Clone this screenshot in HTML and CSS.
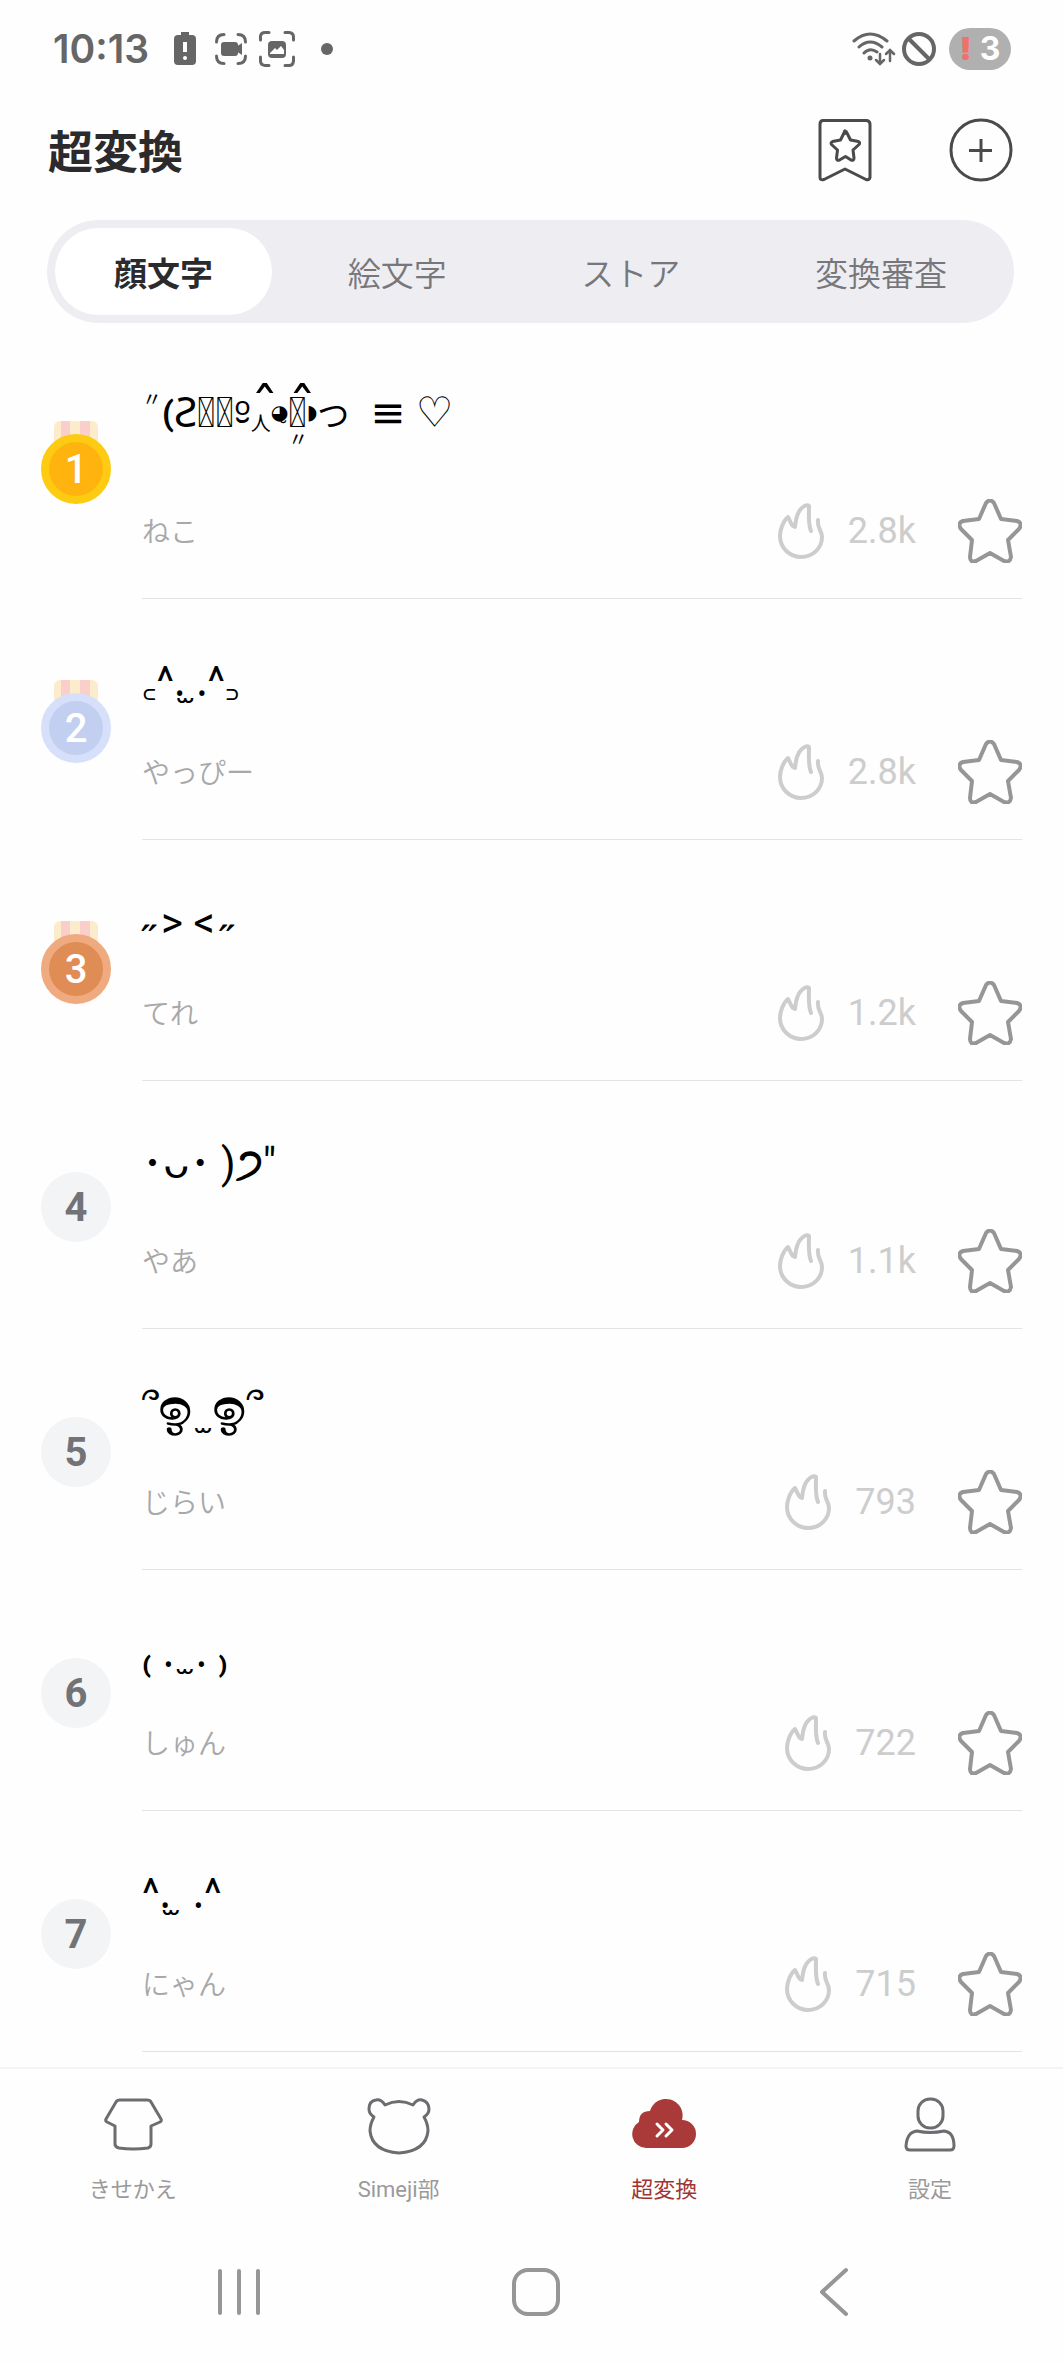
FILE: index.html
```html
<!DOCTYPE html>
<html lang="ja">
<head>
<meta charset="utf-8">
<meta name="viewport" content="width=device-width, initial-scale=1">
<title>超変換</title>
<link rel="stylesheet" href="styles.css">
</head>
<body>
<svg class="defs" width="0" height="0" aria-hidden="true">
  <symbol id="flame" viewBox="0 0 46 56">
    <path d="M33 28 C30 21 31 12 31 3 C29 1 25 3 22 7 C18 12 18 17 17 24 L15 23 C12 20 12 17 10 14 C5 18 2 27 2 33 C2 45 12 54 23 54 C35 54 44 45 44 34 C44 27 39 26 40 17" fill="none" stroke="currentColor" stroke-width="4" stroke-linecap="round" stroke-linejoin="round"/>
  </symbol>
  <symbol id="star" viewBox="0 0 64 64">
    <path d="M28 4 Q32 -1 36 4 L43 20 L59 22 Q65 24 61 30 L50 41 L53 58 Q52 64 46 62 L32 54 L18 62 Q12 64 12 58 L14 41 L3 30 Q-1 24 5 22 L21 20 Z" fill="none" stroke="currentColor" stroke-width="4" stroke-linejoin="round"/>
  </symbol>
  <symbol id="ribbon" viewBox="0 0 44 30">
    <rect width="44" height="30" rx="6" fill="#fdeccb"/>
    <path d="M7 0h9v30h-9zM26 0h10v30h-10z" fill="#fbcfc9"/>
  </symbol>
</svg>
<div class="app">
  <div class="status">
    <div class="status-group">
      <span class="clock">10:13</span>
      <svg class="s-batt" width="24" height="34" viewBox="0 0 24 34"><path d="M8 0h8v3h3q4 0 4 4v22q0 4-4 4H5q-4 0-4-4V7q0-4 4-4h3z" fill="#666"/><path d="M12 10v10" stroke="#fff" stroke-width="4"/><circle cx="12" cy="26" r="2" fill="#fff"/></svg>
      <svg class="s-cam" width="32" height="32" viewBox="0 0 32 32"><path d="M1.500 9Q1.500 1.500 9 1.500M23 1.500Q30.500 1.500 30.500 9M30.500 23Q30.500 30.500 23 30.500M9 30.500Q1.500 30.500 1.500 23" fill="none" stroke="#666" stroke-width="3" stroke-linecap="round"/><rect x="6" y="9" width="17" height="14" rx="3" fill="#666"/><path d="M21 14l6-4v12l-6-4z" fill="#666"/></svg>
      <svg class="s-img" width="36" height="36" viewBox="0 0 36 36"><path d="M1.500 9V5Q2 1.500 6 1.500H10M26 1.500H30Q34.500 2 34.500 6V9M34.500 26V30Q34 34.500 30 34.500H26M10 34.500H6Q1.500 34 1.500 30V26" fill="none" stroke="#666" stroke-width="3" stroke-linecap="round"/><rect x="9" y="10" width="18" height="17" rx="4" fill="#666"/><path d="M11 22l5-5 2 2 4-4 3 4v4H11z" fill="#fff"/></svg>
      <span class="dot"></span>
    </div>
    <div class="status-group right">
      <svg width="44" height="34" viewBox="0 0 44 34"><g fill="none" stroke="#666" stroke-width="3" stroke-linecap="round"><path d="M2 9Q18-5 35 9M7 15Q18 5 30 15M12 21Q18 15 25 20"/><path d="M28 22v9M24 28l4 4 4-4M38 29v-10M34 22l4-4 4 4" stroke-width="2.500"/></g><circle cx="18" cy="26" r="2.500" fill="#666"/></svg>
      <svg width="34" height="34" viewBox="0 0 34 34"><circle cx="17" cy="17" r="15" fill="none" stroke="#666" stroke-width="4"/><path d="M7 7l20 20" stroke="#666" stroke-width="4"/></svg>
      <span class="level"><b>!</b>3</span>
    </div>
  </div>

  <header class="header">
    <h1>超変換</h1>
    <div class="actions">
      <button aria-label="お気に入り"><svg width="64" height="64" viewBox="0 0 64 64"><g fill="none" stroke="#4a4a4a" stroke-width="3" stroke-linejoin="round"><path d="M10 2.500h43q4 0 4 4v53q-1 3-4 2L32 51 11 61.500q-4 1-4-2V6.500q0-4 3-4z"/><path d="M32 15.500Q32.800 12 34 15l3.500 7 8 1.500q2 1 .500 3L40 32l1 8q0 3-3 2l-5.500-3.500L26.500 42q-3 1-3-2l1-8-6-5.500q-1-2 1-3l8-1.500 3.500-7Q32 12 32 13z"/></g></svg></button>
      <button aria-label="追加"><svg width="64" height="64" viewBox="0 0 64 64"><circle cx="32" cy="32" r="30" fill="none" stroke="#4a4a4a" stroke-width="3"/><path d="M32 21v23M20 32.500h23" stroke="#4a4a4a" stroke-width="3"/></svg></button>
    </div>
  </header>

  <nav class="segments">
    <button class="segment on">顔文字</button>
    <button class="segment">絵文字</button>
    <button class="segment">ストア</button>
    <button class="segment">変換審査</button>
  </nav>

  <main>
  <ol class="list">
    <li class="row">
      <div class="medal gold"><svg class="ribbon" width="44" height="30"><use href="#ribbon"/></svg><span class="disc">1</span></div>
      <div class="body">
        <p class="kao double"><span class="up">〃</span><b class="arm">(</b>Ƨ&#xE000;&#xE000;ᵒ̮<span class="hat">ˆ</span><span class="mouth">人</span><span class="blob">◕̮</span><span class="hat">ˆ</span><span class="low">〃</span>&#xE000;<span class="blob">◗</span><span class="paw">つ</span>  ≡ ♡</p>
        <div class="foot"><span class="yomi">ねこ</span><span class="heat"><svg width="46" height="56"><use href="#flame"/></svg>2.8k</span><button class="fav" aria-label="保存"><svg width="64" height="64"><use href="#star"/></svg></button></div>
      </div>
    </li>
    <li class="row">
      <div class="medal silver"><svg class="ribbon" width="44" height="30"><use href="#ribbon"/></svg><span class="disc">2</span></div>
      <div class="body">
        <p class="kao">꜀^<span class="eye">.̫ .</span>^꜆</p>
        <div class="foot"><span class="yomi">やっぴー</span><span class="heat"><svg width="46" height="56"><use href="#flame"/></svg>2.8k</span><button class="fav" aria-label="保存"><svg width="64" height="64"><use href="#star"/></svg></button></div>
      </div>
    </li>
    <li class="row">
      <div class="medal bronze"><svg class="ribbon" width="44" height="30"><use href="#ribbon"/></svg><span class="disc">3</span></div>
      <div class="body">
        <p class="kao cheeks"><span class="blush">˶</span><span>&gt; &lt;</span><span class="blush">˶</span></p>
        <div class="foot"><span class="yomi">てれ</span><span class="heat"><svg width="46" height="56"><use href="#flame"/></svg>1.2k</span><button class="fav" aria-label="保存"><svg width="64" height="64"><use href="#star"/></svg></button></div>
      </div>
    </li>
    <li class="row">
      <span class="rank">4</span>
      <div class="body">
        <p class="kao tall">･ᴗ･ )<b>੭</b>"</p>
        <div class="foot"><span class="yomi">やあ</span><span class="heat"><svg width="46" height="56"><use href="#flame"/></svg>1.1k</span><button class="fav" aria-label="保存"><svg width="64" height="64"><use href="#star"/></svg></button></div>
      </div>
    </li>
    <li class="row">
      <span class="rank">5</span>
      <div class="body">
        <p class="kao">՞<b class="swirl">ඉ</b> ̫ <b class="swirl">ඉ</b>՞</p>
        <div class="foot"><span class="yomi">じらい</span><span class="heat"><svg width="46" height="56"><use href="#flame"/></svg>793</span><button class="fav" aria-label="保存"><svg width="64" height="64"><use href="#star"/></svg></button></div>
      </div>
    </li>
    <li class="row">
      <span class="rank">6</span>
      <div class="body">
        <p class="kao">₍ <span class="eye">. ̫ .</span> ₎</p>
        <div class="foot"><span class="yomi">しゅん</span><span class="heat"><svg width="46" height="56"><use href="#flame"/></svg>722</span><button class="fav" aria-label="保存"><svg width="64" height="64"><use href="#star"/></svg></button></div>
      </div>
    </li>
    <li class="row">
      <span class="rank">7</span>
      <div class="body">
        <p class="kao">^<span class="eye">.̫  .</span>^</p>
        <div class="foot"><span class="yomi">にゃん</span><span class="heat"><svg width="46" height="56"><use href="#flame"/></svg>715</span><button class="fav" aria-label="保存"><svg width="64" height="64"><use href="#star"/></svg></button></div>
      </div>
    </li>
  </ol>
  </main>

  <nav class="tabbar">
    <a class="tab" href="#kisekae"><svg width="64" height="64" viewBox="0 0 64 64"><path d="M19 7h27q3 0 4 2l10 17q1 2-1 3l-9 4v18q0 3-3 4-15 2-29 0-4-1-4-4V33l-8-4q-2-1-1-3L15 9q1-2 4-2z" fill="none" stroke="#6c6d70" stroke-width="3" stroke-linejoin="round"/></svg>きせかえ</a>
    <a class="tab" href="#simeji"><svg width="64" height="64" viewBox="0 0 64 64"><path d="M18 12q14-7 28 0 4-6 9-5 7 2 7 9 0 5-5 8 4 7 4 14-2 20-29 22Q5 58 3 38q0-7 4-14-5-3-5-8 0-8 7-9 5-1 9 5z" fill="none" stroke="#6c6d70" stroke-width="3" stroke-linejoin="round"/></svg>Simeji部</a>
    <a class="tab on" href="#henkan"><svg width="64" height="64" viewBox="0 0 64 64"><path d="M14 55A14 14 0 0 1 7 29Q7 18 18 18A16 16 0 0 1 50 27A14 14 0 0 1 50 55Z" fill="#aa3a3a"/><path d="M25 31l6 6-6 6M34 31l6 6-6 6" fill="none" stroke="#fff" stroke-width="3" stroke-linecap="round" stroke-linejoin="round"/></svg>超変換</a>
    <a class="tab" href="#settings"><svg width="64" height="64" viewBox="0 0 64 64"><g fill="none" stroke="#6c6d70" stroke-width="3" stroke-linejoin="round"><rect x="20" y="6" width="25" height="29" rx="12"/><path d="M19 38q13 3 27 0 10 1 10 15 0 4-4 4H12q-4 0-4-4Q9 39 19 38z"/></g></svg>設定</a>
  </nav>

  <div class="sysnav">
    <button aria-label="履歴"><svg width="48" height="50" viewBox="0 0 48 50"><path d="M5 4v42M24 4v42M43 4v42" stroke="#969696" stroke-width="4" stroke-linecap="round"/></svg></button>
    <button aria-label="ホーム"><svg width="50" height="50" viewBox="0 0 50 50"><rect x="3" y="3" width="44" height="44" rx="14" fill="none" stroke="#969696" stroke-width="4"/></svg></button>
    <button aria-label="戻る"><svg width="32" height="50" viewBox="0 0 32 50"><path d="M28 3L4 25l24 22" fill="none" stroke="#969696" stroke-width="4" stroke-linecap="round" stroke-linejoin="round"/></svg></button>
  </div>
</div>
</body>
</html>
```
FILE: styles.css
```css
* { box-sizing: border-box; }
body {
  margin: 0;
  background: #fefefe;
  color: #2b2b2e;
  font-family: Roboto, "Noto Sans CJK JP", sans-serif;
}
button {
  margin: 0;
  padding: 0;
  border: 0;
  background: none;
  color: inherit;
  font: inherit;
}
svg { display: block; flex: none; }
.defs { position: absolute; }
.app {
  display: flex;
  flex-direction: column;
  min-height: 100vh;
}
main { flex: 1; }

/* device status bar */
.status {
  display: flex;
  justify-content: space-between;
  align-items: center;
  height: 98px;
  padding: 0 52px 0 53px;
}
.status-group { display: flex; align-items: center; }
.status-group.right { gap: 6px; }
.clock {
  margin-right: 24px;
  color: #666;
  font: 600 39px/48px Inter, sans-serif;
}
.s-batt { margin-right: 18px; }
.s-cam { margin-right: 12px; }
.s-img { margin-right: 26px; }
.dot { width: 12px; height: 12px; border-radius: 50%; background: #666; }
.level {
  display: flex;
  justify-content: center;
  gap: 8px;
  width: 62px;
  margin-left: 7px;
  border-radius: 21px;
  background: #b0b0b0;
  color: #fff;
  font: 700 32px/42px Inter, sans-serif;
}
.level b { color: #f0706a; }

/* title bar */
.header {
  display: flex;
  justify-content: space-between;
  align-items: center;
  height: 104px;
  padding: 0 50px 0 48px;
}
.header h1 { margin: 0; padding-top: 8px; font-size: 45px; line-height: 64px; font-weight: 700; }
.actions { display: flex; gap: 72px; }

.segments {
  display: flex;
  justify-content: space-between;
  margin: 18px 49px 0 47px;
  padding: 8px;
  border-radius: 52px;
  background: #eeedf2;
}
.segment {
  padding: 6px 59px 0;
  border-radius: 44px;
  color: #77777b;
  font-size: 33px;
  font-weight: 350;
  line-height: 81px;
}
.segment.on { background: #fff; color: #2b2b2e; font-weight: 700; }

/* ranking */
.list { margin: 0; padding: 0 41px 15px; list-style: none; }
.row { display: grid; grid-template-columns: 70px 1fr; column-gap: 31px; }
.body { padding: 58px 0 35px; border-bottom: 1px solid #e3e3e3; }
.kao {
  margin: 0 0 33px;
  height: 50px;
  color: #000;
  font: 400 42px/50px Roboto, "Noto Sans", "DejaVu Sans", "Noto Sans CJK JP", sans-serif;
  white-space: pre;
}
.kao.tall { height: 57px; }
.kao.double { height: 85px; line-height: 64px; }
.kao span { line-height: 1px; }
.kao.cheeks { display: flex; gap: 5px; }
.kao.cheeks span { line-height: 50px; }
.up { font-size: 20px; vertical-align: 20px; }
.arm { font-size: 34px; line-height: 1px; vertical-align: 2px; }
.paw { font-size: 32px; }
.mouth { font-size: 20px; vertical-align: -4px; }
.blob { font-size: 20px; vertical-align: 8px; }
.hat, .low { display: inline-block; width: 0; }
.hat { font-family: "DejaVu Sans", sans-serif; font-size: 56px; }
.low { font-size: 20px; vertical-align: -20px; }
.eye { font-family: "Noto Sans", sans-serif; }
.blush { font-family: "DejaVu Sans", sans-serif; }
.swirl { font-size: 52px; line-height: 1px; }
.foot { display: flex; align-items: center; height: 64px; }
.yomi { flex: 1; padding-top: 3px; color: #a8a8a8; font-size: 28px; line-height: 40px; font-weight: 350; }
.heat {
  display: flex;
  align-items: center;
  gap: 24px;
  margin-right: 42px;
  color: #cdcdcd;
  font-size: 36px;
  line-height: 44px;
}
.fav { color: #969696; }
.medal { align-self: center; display: flex; flex-direction: column; align-items: center; margin-top: 3px; }
.ribbon { margin-bottom: -17px; }
.disc, .rank {
  width: 70px;
  height: 70px;
  border-radius: 50%;
  text-align: center;
  font-size: 40px;
}
.disc { position: relative; border: 8px solid; font-weight: 500; line-height: 56px; }
.gold .disc { background: #ffb30f; border-color: #fdcc12; }
.silver .disc { background: #c3cff1; border-color: #d6e0fb; }
.bronze .disc { background: #e08c55; border-color: #f0aa80; }
.disc { color: #fff; }
.rank {
  align-self: center;
  margin-top: 4px;
  background: #f3f4f6;
  color: #727377;
  font-weight: 700;
  line-height: 72px;
}

/* bottom tabs */
.tabbar { display: flex; padding: 24px 0 15px; border-top: 2px solid #f3f4f5; }
.tab {
  flex: 1;
  display: flex;
  flex-direction: column;
  align-items: center;
  gap: 18px;
  color: #9a9a9a;
  font-size: 22px;
  line-height: 30px;
  text-decoration: none;
}
.tab.on { color: #a03434; }

.sysnav {
  display: grid;
  grid-template-columns: repeat(3, 1fr);
  align-items: center;
  justify-items: center;
  height: 144px;
  padding: 0 80px 0 90px;
}
```
